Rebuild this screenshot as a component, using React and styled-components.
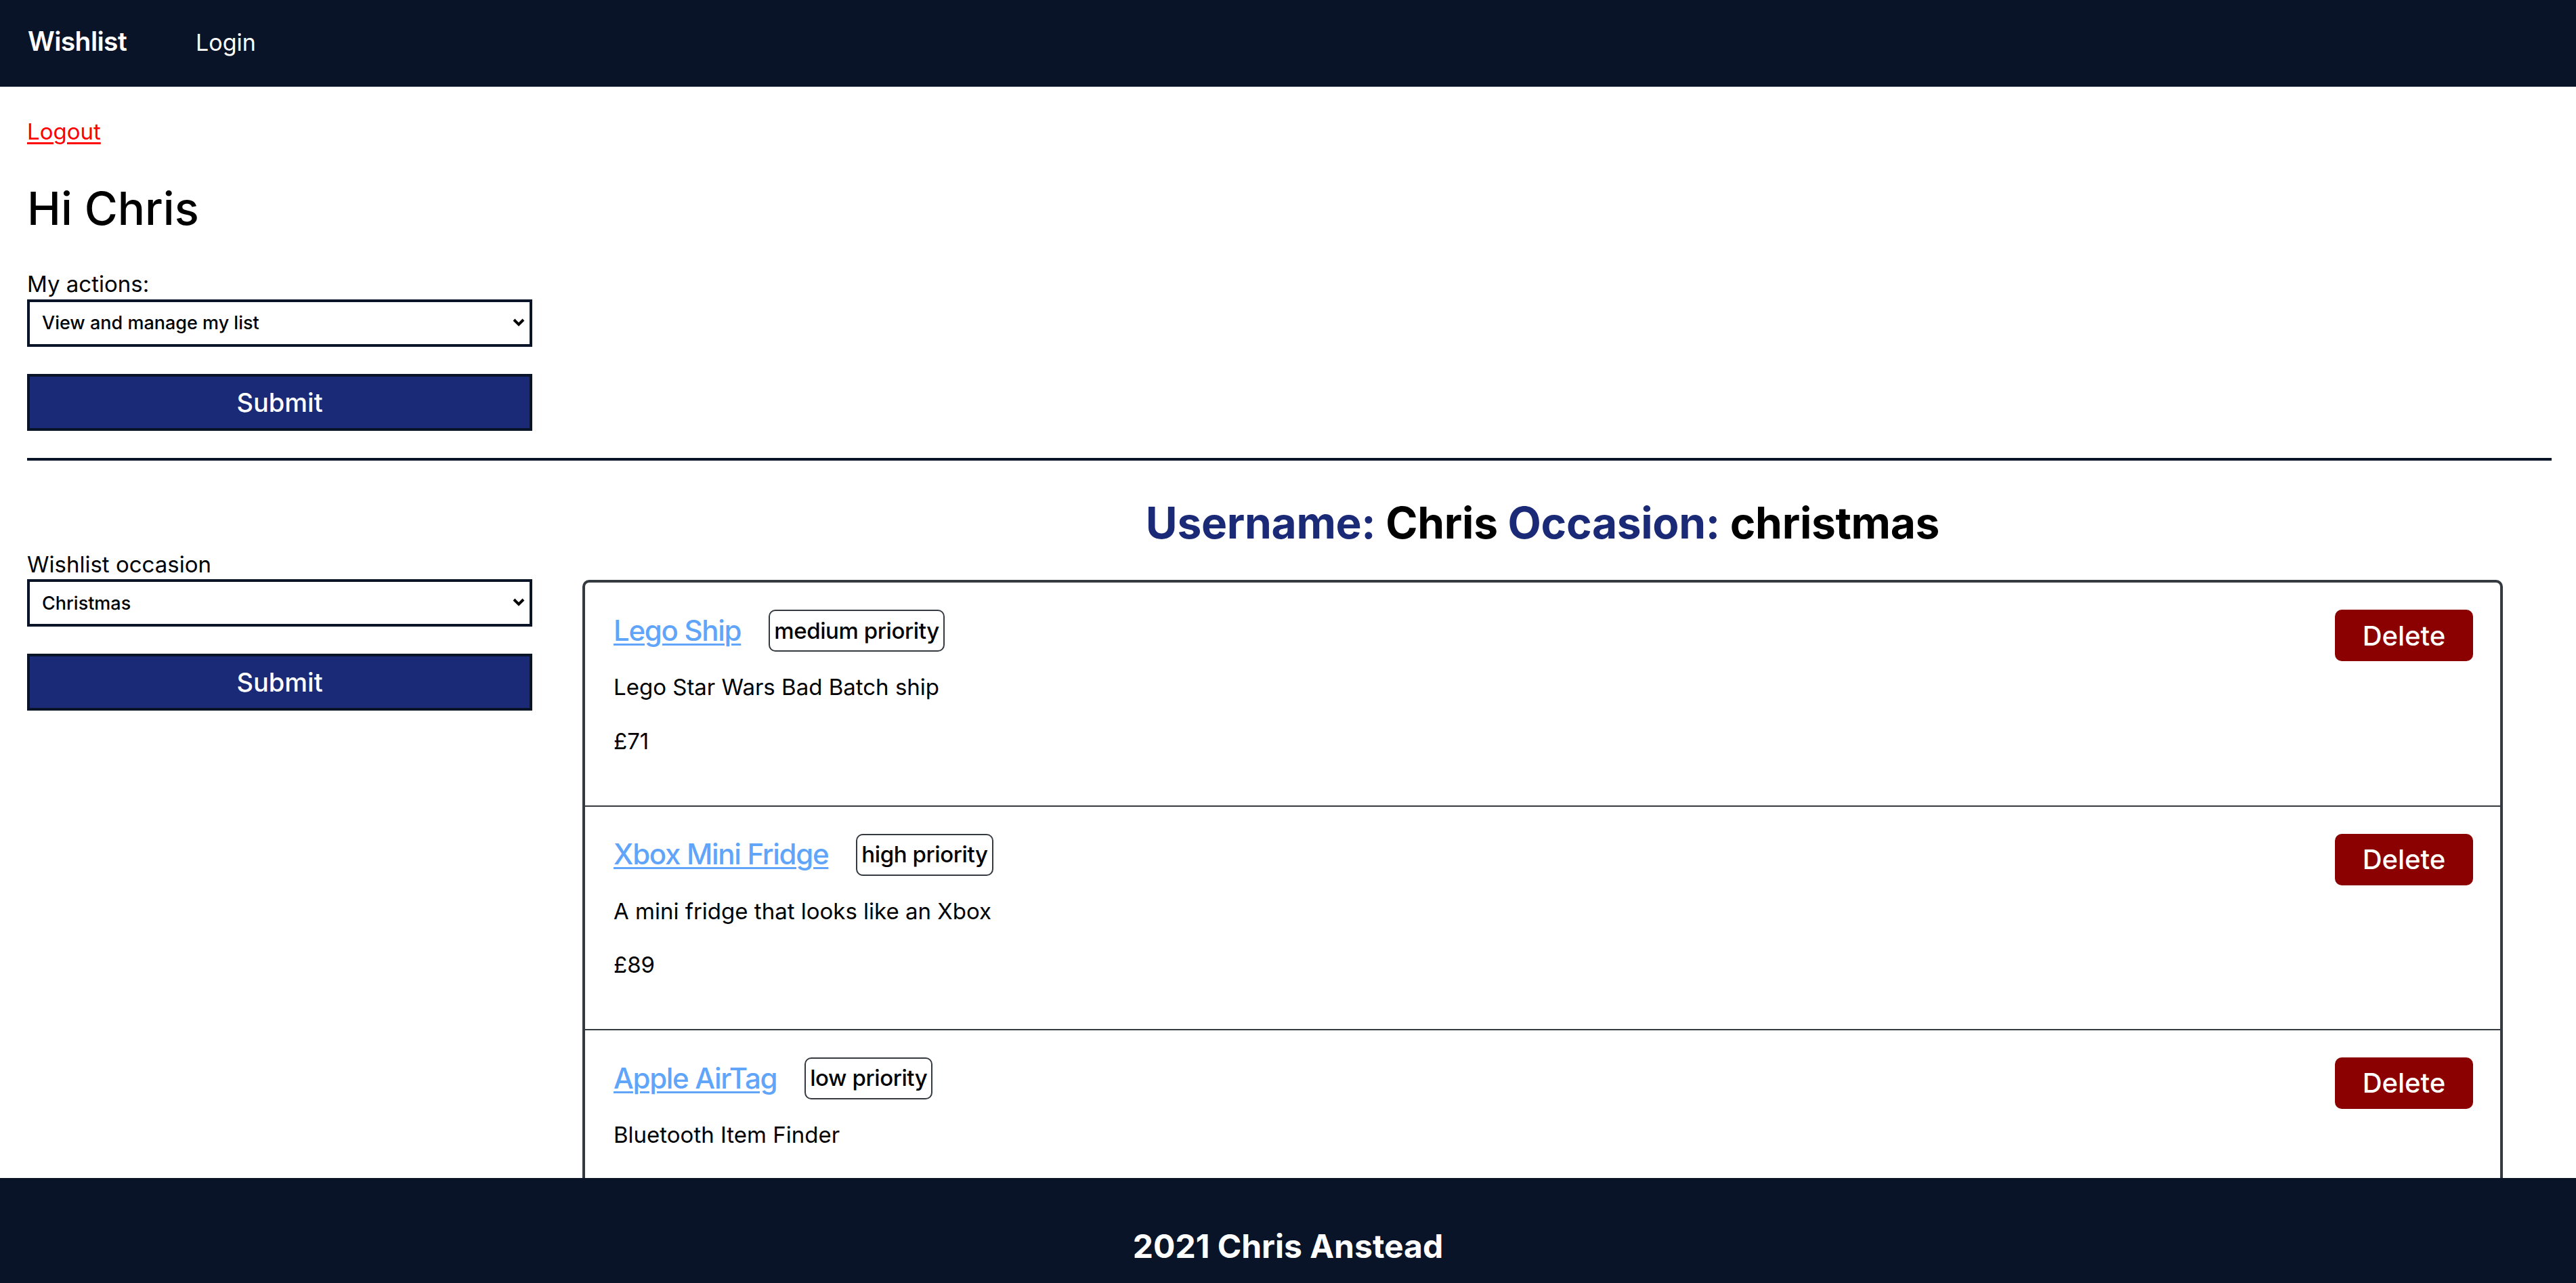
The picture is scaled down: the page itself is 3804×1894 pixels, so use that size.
import styled, { createGlobalStyle } from "styled-components";

const GlobalStyle = createGlobalStyle`
  * {
    box-sizing: border-box;
  }
  body {
    margin: 0;
    background: #fff;
    color: #000;
    font-family: Inter, "Liberation Sans", sans-serif;
  }
`;

const NAVY = "#0a1428";
const BLUE = "#1b2a77";
const EDGE = "#343a40";

const Nav = styled.nav`
  display: flex;
  align-items: baseline;
  height: 128px;
  padding: 38px 0 0 41px;
  background: ${NAVY};
  color: #fff;
`;

const Brand = styled.a`
  font-size: 39px;
  font-weight: 600;
  letter-spacing: -0.6px;
  line-height: 1.2;
  color: #fff;
  text-decoration: none;
`;

const NavLink = styled.a`
  margin-left: 102px;
  font-size: 34px;
  line-height: 1.2;
  color: #fff;
  text-decoration: none;
`;

const Main = styled.main`
  padding: 0 36px 260px 40px;
`;

const Logout = styled.a`
  display: inline-block;
  margin-top: 47px;
  font-size: 33px;
  line-height: 1.2;
  color: #ff0000;
  text-decoration: underline;
  text-underline-offset: 4px;
  text-decoration-thickness: 3px;
`;

const Greeting = styled.h1`
  margin: 53px 0 0;
  font-size: 67px;
  font-weight: 500;
  line-height: 1.2;
`;

const Form = styled.form`
  display: flex;
  flex-direction: column;
  width: 746px;
  margin-top: ${(p) => p.$top || 0}px;
`;

const Label = styled.label`
  font-size: 33px;
  line-height: 1.2;
  margin-bottom: 2px;
`;

const SelectWrap = styled.div`
  position: relative;
  width: 100%;
`;

const Select = styled.select`
  appearance: none;
  width: 100%;
  height: 70px;
  padding: 0 40px 0 18px;
  border: 4px solid ${NAVY};
  border-radius: 0;
  background: #fff;
  color: #000;
  font-family: inherit;
  font-size: 27px;
  font-weight: 500;
`;

const Chevron = styled.svg`
  position: absolute;
  right: 11px;
  top: 28px;
  pointer-events: none;
`;

const SubmitButton = styled.button`
  height: 84px;
  margin-top: 40px;
  border: 4px solid ${NAVY};
  background: ${BLUE};
  color: #fff;
  font-family: inherit;
  font-size: 38px;
  font-weight: 500;
`;

const Rule = styled.hr`
  height: 4px;
  margin: 40px 0 0;
  border: none;
  background: ${NAVY};
`;

const Split = styled.section`
  display: grid;
  grid-template-columns: 746px 1fr;
  column-gap: 74px;
  padding-right: 72px;
`;

const Side = styled.div`
  padding-top: 134px;
`;

const ListColumn = styled.div`
  display: flex;
  flex-direction: column;
`;

const ListTitle = styled.h2`
  margin: 54px 0 46px;
  text-align: center;
  font-size: 64px;
  font-weight: 700;
  letter-spacing: -0.3px;
  line-height: 1.2;
`;

const Key = styled.span`
  color: ${BLUE};
`;

const ItemList = styled.ul`
  margin: 0;
  padding: 0;
  list-style: none;
  border: 4px solid ${EDGE};
  border-radius: 10px;
  overflow: hidden;
`;

const Item = styled.li`
  display: flex;
  justify-content: space-between;
  align-items: flex-start;
  padding: 40px 40px 74px 42px;
  & + & {
    border-top: 2.5px solid ${EDGE};
  }
`;

const ItemBody = styled.div`
  display: flex;
  flex-direction: column;
`;

const TitleRow = styled.div`
  display: flex;
  align-items: center;
  gap: 41px;
`;

const ItemLink = styled.a`
  font-size: 42px;
  font-weight: 500;
  letter-spacing: -1.3px;
  line-height: 1.2;
  color: #60a5fa;
  text-decoration: underline;
  text-underline-offset: 4px;
  text-decoration-thickness: 3px;
`;

const Badge = styled.span`
  display: inline-flex;
  align-items: center;
  height: 62px;
  padding: 0 6px;
  border: 2.5px solid ${EDGE};
  border-radius: 10px;
  font-size: 33px;
  font-weight: 500;
  letter-spacing: -0.4px;
  line-height: 1;
`;

const Text = styled.p`
  margin: ${(p) => p.$gap}px 0 0;
  font-size: 33px;
  line-height: 1.2;
`;

const DeleteButton = styled.button`
  width: 204px;
  height: 76px;
  border: none;
  border-radius: 10px;
  background: #8b0000;
  color: #fff;
  font-family: inherit;
  font-size: 40px;
  font-weight: 500;
`;

const Footer = styled.footer`
  position: fixed;
  left: 0;
  right: 0;
  bottom: 0;
  height: 155px;
  padding-top: 72px;
  background: ${NAVY};
  color: #fff;
  text-align: center;
  font-size: 48px;
  font-weight: 700;
  line-height: 1.2;
`;

const items = [
  { name: "Lego Ship", priority: "medium", desc: "Lego Star Wars Bad Batch ship", price: 71 },
  { name: "Xbox Mini Fridge", priority: "high", desc: "A mini fridge that looks like an Xbox", price: 89 },
  { name: "Apple AirTag", priority: "low", desc: "Bluetooth Item Finder", price: 29 },
];

const Dropdown = ({ id, options }) => (
  <SelectWrap>
    <Select id={id}>
      {options.map((o) => (
        <option key={o}>{o}</option>
      ))}
    </Select>
    <Chevron width="18" height="12" viewBox="0 0 18 12">
      <path d="M2 2 L9 9 L16 2" fill="none" stroke="#000" strokeWidth="4" />
    </Chevron>
  </SelectWrap>
);

const App = () => {
  return (
    <>
      <GlobalStyle />
      <Nav>
        <Brand href="#">Wishlist</Brand>
        <NavLink href="#">Login</NavLink>
      </Nav>
      <Main>
        <Logout href="#">Logout</Logout>
        <Greeting>Hi Chris</Greeting>
        <Form $top={52} onSubmit={(e) => e.preventDefault()}>
          <Label htmlFor="actions">My actions:</Label>
          <Dropdown id="actions" options={["View and manage my list"]} />
          <SubmitButton type="submit">Submit</SubmitButton>
        </Form>
        <Rule />
        <Split>
          <Side>
            <Form onSubmit={(e) => e.preventDefault()}>
              <Label htmlFor="occasion">Wishlist occasion</Label>
              <Dropdown id="occasion" options={["Christmas"]} />
              <SubmitButton type="submit">Submit</SubmitButton>
            </Form>
          </Side>
          <ListColumn>
            <ListTitle>
              <Key>Username:</Key> Chris <Key>Occasion:</Key> christmas
            </ListTitle>
            <ItemList>
              {items.map((item) => (
                <Item key={item.name}>
                  <ItemBody>
                    <TitleRow>
                      <ItemLink href="#">{item.name}</ItemLink>
                      <Badge>{item.priority} priority</Badge>
                    </TitleRow>
                    <Text $gap={33}>{item.desc}</Text>
                    <Text $gap={40}>£{item.price}</Text>
                  </ItemBody>
                  <DeleteButton>Delete</DeleteButton>
                </Item>
              ))}
            </ItemList>
          </ListColumn>
        </Split>
      </Main>
      <Footer>2021 Chris Anstead</Footer>
    </>
  );
};

export default App;
